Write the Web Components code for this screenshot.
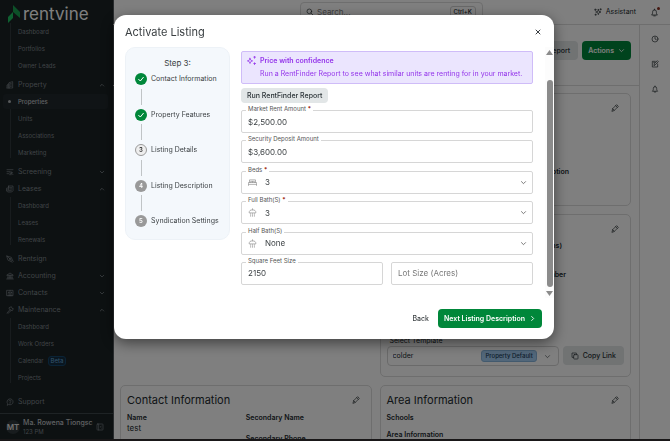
<!DOCTYPE html>
<html lang="en">
<head>
<meta charset="utf-8">
<meta name="viewport" content="width=device-width, initial-scale=1">
<title>Rentvine - Activate Listing</title>
<style>
    html, body { height: 100%; }
    body {
        margin: 0;
        overflow: hidden;
        font-family: Inter, "Liberation Sans", sans-serif;
        font-size: 7px;
        line-height: 10px;
        color: #222a2e;
        background: #fff;
    }
</style>
</head>
<body>
<rv-app>
    <rv-sidebar slot="sidebar">
        <rv-nav-group>
            <rv-nav-link>Dashboard</rv-nav-link>
            <rv-nav-link>Portfolios</rv-nav-link>
            <rv-nav-link>Owner Leads</rv-nav-link>
        </rv-nav-group>
        <rv-nav-group label="Property" icon="building" state="open">
            <rv-nav-link active>Properties</rv-nav-link>
            <rv-nav-link>Units</rv-nav-link>
            <rv-nav-link>Associations</rv-nav-link>
            <rv-nav-link>Marketing</rv-nav-link>
        </rv-nav-group>
        <rv-nav-group label="Screening" icon="screening" state="closed"></rv-nav-group>
        <rv-nav-group label="Leases" icon="leases" state="open">
            <rv-nav-link>Dashboard</rv-nav-link>
            <rv-nav-link>Leases</rv-nav-link>
            <rv-nav-link>Renewals</rv-nav-link>
        </rv-nav-group>
        <rv-nav-group label="Rentsign" icon="pen"></rv-nav-group>
        <rv-nav-group label="Accounting" icon="bank" state="closed"></rv-nav-group>
        <rv-nav-group label="Contacts" icon="contacts" state="closed"></rv-nav-group>
        <rv-nav-group label="Maintenance" icon="hammer" state="open">
            <rv-nav-link>Dashboard</rv-nav-link>
            <rv-nav-link>Work Orders</rv-nav-link>
            <rv-nav-link badge="Beta">Calendar</rv-nav-link>
            <rv-nav-link>Projects</rv-nav-link>
        </rv-nav-group>
        <rv-nav-group class="support" label="Support" icon="help"></rv-nav-group>
    </rv-sidebar>

    <rv-topbar slot="topbar"></rv-topbar>
    <rv-rail slot="rail"></rv-rail>
    <rv-property></rv-property>
</rv-app>

<rv-modal heading="Activate Listing">
    <rv-stepper slot="steps" heading="Step 3:" current="3"></rv-stepper>
    <rv-banner heading="Price with confidence">Run a RentFinder Report to see what similar units are renting for in your market.</rv-banner>
    <rv-button kind="soft">Run RentFinder Report</rv-button>
    <rv-fields>
        <rv-field label="Market Rent Amount" value="$2,500.00" required></rv-field>
        <rv-field label="Security Deposit Amount" value="$3,600.00"></rv-field>
        <rv-field label="Beds" value="3" options="1,2,3,4" icon="bed" required></rv-field>
        <rv-field label="Full Bath(S)" value="3" options="1,2,3,4" icon="shower" required></rv-field>
        <rv-field label="Half Bath(S)" value="None" options="None,1,2" icon="shower"></rv-field>
        <rv-field class="half" label="Square Feet Size" value="2150"></rv-field>
        <rv-field class="half" placeholder="Lot Size (Acres)"></rv-field>
    </rv-fields>
    <rv-button slot="footer" kind="plain">Back</rv-button>
    <rv-button slot="footer" kind="primary" icon="right">Next Listing Description</rv-button>
</rv-modal>

<script>
    // Stroke icons on a 24 grid
    const ICONS = {
        building: '<path d="M3 21V12l6-4v13M9 21V5l11-3v19H3M13 8h3M13 12h3M13 16h3M6 13v5"/>',
        screening: '<path d="M3 5h18M3 11h8M3 17h6"/><circle cx="15" cy="14" r="3"/><path d="M17 16l4 4M11 20h5"/>',
        leases: '<path d="M8 3h13v14l-4 4H5l-3-3V9h6zM8 3v12H2M12 8h5M12 12h5M8 17h8"/>',
        pen: '<path d="M3 3l13 4 3 8-4 4-8-3zM3 3l8 8M15 19l4 3 3-3-3-4"/><circle cx="12" cy="12" r="2"/>',
        bank: '<path d="M3 9l9-6 9 6zM6 10v8M10 10v8M14 10v8M18 10v8M4 18h16M2 21h20"/>',
        contacts: '<path d="M3 4h18v16H3zM12 4v16M6 20h12"/><circle cx="8" cy="10" r="1"/><circle cx="16" cy="10" r="1"/><path d="M6 15h4M14 15h4"/>',
        hammer: '<path d="M3 21l9-10M5 23l10-9M10 5l6-3 2 5 4 1-3 6-4-1-5-4z"/>',
        help: '<path d="M4 21l1-4a9 9 0 1 1 4 3zM9 9a3 3 0 1 1 4 3l-1 2M12 17v1"/>',
        panel: '<rect x="3" y="3" width="18" height="18" rx="2"/><path d="M8 3v18M16 9l-3 3 3 3"/>',
        search: '<circle cx="10" cy="10" r="7"/><path d="M15 15l7 7"/>',
        spark: '<path d="M13 4l2 6 6 2-6 2-2 6-2-6-6-2 6-2zM4 3v5M2 5h5M20 2v4M18 4h4M5 18v4M3 20h4"/>',
        bell: '<path d="M5 18c2-2 2-5 2-8a5 5 0 0 1 10 0c0 3 0 6 2 8zM10 21h4M12 3v2"/>',
        clock: '<circle cx="12" cy="12" r="9"/><path d="M12 6v6l4 2"/>',
        note: '<path d="M13 4H4v17h16v-9M9 16l1-5 9-9 3 3-9 9zM8 8h3"/>',
        pencil: '<path d="M3 21l2-7L17 2l5 5L10 19zM14 5l5 5M5 14l5 5"/>',
        copy: '<rect x="8" y="8" width="13" height="13" rx="2"/><path d="M16 8V3H3v13h5"/>',
        down: '<path d="M5 9l7 7 7-7"/>',
        up: '<path d="M5 16l7-7 7 7"/>',
        right: '<path d="M9 5l7 7-7 7"/>',
        close: '<path d="M4 4l16 16M20 4L4 20"/>',
        check: '<path d="M5 13l5 5 9-11"/>',
        bed: '<path d="M1 20v-8h22v8M1 17h22M4 12V5h16v7M7 12V9h10v3M12 9v3"/>',
        shower: '<path d="M3 12c0-5 3-7 9-7s9 2 9 7zM12 5V2M7 15v2M12 15v2M17 15v2M7 20v2M12 20v2M17 20v2"/>',
        stars: '<path d="M8 6l2 5 5 2-5 2-2 5-2-5-5-2 5-2zM20 1v5M18 3h5M20 18v5M18 20h5"/>'
    };

    const icon = (name, size = 8, weight = 2) =>
        `<svg width="${size}" height="${size}" viewBox="0 0 24 24" fill="none" stroke="currentColor" stroke-width="${weight}" stroke-linecap="round" stroke-linejoin="round" aria-hidden="true">${ICONS[name]}</svg>`;

    const BASE = `
        * { box-sizing: border-box; }
        :host { display: block; box-sizing: border-box; }
        svg { display: block; flex: none; }
        a { color: inherit; text-decoration: none; }
        button, input, select { font: inherit; color: inherit; margin: 0; border: 0; padding: 0; background: none; }
    `;

    class RvElement extends HTMLElement {
        constructor() {
            super();
            this.attachShadow({ mode: 'open' });
        }
        connectedCallback() {
            this.shadowRoot.innerHTML = `<style>${BASE}${this.styles()}</style>${this.markup()}`;
        }
        attr(name) {
            return this.getAttribute(name) || '';
        }
    }

    class RvApp extends RvElement {
        styles() {
            return `
                :host {
                    display: grid;
                    grid-template-columns: 113px minmax(0, 1fr) 31px;
                    grid-template-rows: 25px minmax(0, 1fr) 2px;
                    height: 100vh;
                }
                .side { grid-row: 1 / 3; display: grid; min-height: 0; }
                .top { grid-column: 2 / 4; }
                .page { overflow: hidden; }
                .edge { grid-column: 1 / 4; background: #332e30; }
            `;
        }
        markup() {
            return `
                <div class="side"><slot name="sidebar"></slot></div>
                <div class="top"><slot name="topbar"></slot></div>
                <main class="page"><slot></slot></main>
                <slot name="rail"></slot>
                <div class="edge"></div>
            `;
        }
    }

    class RvSidebar extends RvElement {
        styles() {
            return `
                :host {
                    display: flex;
                    flex-direction: column;
                    min-height: 0;
                    background: #1a2224;
                    border-right: 1px solid #50565a;
                    color: #80888e;
                }
                .logo { display: flex; align-items: center; gap: 3px; height: 23px; padding: 5px 0 0 8px; color: #fff; font-size: 17px; line-height: 18px; flex: none; }
                nav { flex: 1; min-height: 0; overflow: hidden; }
                footer { display: flex; align-items: center; gap: 3px; height: 26px; padding: 0 9px 0 6px; border-top: 1px solid #3c464a; }
                .avatar { width: 14px; height: 14px; border-radius: 50%; background: #30383c; display: grid; place-items: center; font-weight: 600; font-size: 8px; color: #e0e0e0; }
                .who { flex: 1; min-width: 0; font-size: 6px; line-height: 9px; white-space: nowrap; }
                .who b { display: block; font-weight: 500; font-size: 7px; color: #c0c4c8; }
            `;
        }
        markup() {
            return `
                <a class="logo" href="#">
                    <svg width="12" height="18" viewBox="0 0 12 18"><path fill="#18a050" d="M5 0l7 7v6L5 7z"/><path fill="#1cc060" d="M0 12l5-5v6l-5 5z"/></svg>
                    <span>rentvine</span>
                </a>
                <nav><slot></slot></nav>
                <footer>
                    <span class="avatar">MT</span>
                    <span class="who"><b>Ma. Rowena Tiongsc</b>123 PM</span>
                    ${icon('panel')}
                </footer>
            `;
        }
    }

    class RvNavGroup extends RvElement {
        styles() {
            return `
                :host(.support) { margin-top: 5px; }
                .head { display: flex; align-items: center; gap: 4px; height: 17px; padding: 0 8px 0 6px; }
                .head span { flex: 1; }
                .list { display: block; position: relative; padding-bottom: 2px; }
                .list::before { content: ""; position: absolute; left: 10px; top: 0; bottom: 5px; width: 1px; background: #30383c; }
            `;
        }
        markup() {
            const state = this.attr('state');
            const arrow = state ? icon(state === 'open' ? 'up' : 'down', 6, 3) : '';
            const head = this.attr('label')
                ? `<a class="head" href="#">${icon(this.attr('icon'))}<span>${this.attr('label')}</span>${arrow}</a>`
                : '';
            return head + (this.children.length ? '<div class="list"><slot></slot></div>' : '');
        }
    }

    class RvNavLink extends RvElement {
        styles() {
            return `
                a { display: flex; align-items: center; gap: 4px; position: relative; height: 17px; padding-left: 18px; font-size: 6px; }
                :host([active]) a { height: 15px; margin: 1px 5px 1px 3px; padding-left: 15px; border-radius: 3px; background: #20282c; color: #c0c4c8; font-weight: 500; }
                :host([active]) a::before { content: ""; position: absolute; left: 5px; width: 3px; height: 3px; border-radius: 50%; background: #b0b4b8; }
                .badge { padding: 0 2px; border: 1px solid #14466c; border-radius: 3px; background: #122c40; color: #68a8d8; line-height: 8px; }
            `;
        }
        markup() {
            const badge = this.attr('badge');
            return `<a href="#"><slot></slot>${badge ? `<span class="badge">${badge}</span>` : ''}</a>`;
        }
    }

    class RvTopbar extends RvElement {
        styles() {
            return `
                :host { display: grid; grid-template-columns: 187px minmax(0, 183px) 1fr; height: 25px; border-bottom: 1px solid #dcdcdc; }
                .search { grid-column: 2; display: flex; align-items: center; gap: 3px; height: 19px; margin-top: 2px; padding: 0 6px 0 5px; border: 1px solid #dcdcdc; border-radius: 4px; }
                input { flex: 1; min-width: 0; font-size: 8px; }
                input::placeholder { color: #808080; opacity: 1; }
                kbd { padding: 0 3px; border: 1px solid #d0d0d0; border-radius: 3px; font: 500 6px/10px Inter, sans-serif; }
                .tools { display: flex; align-items: center; justify-content: flex-end; gap: 14px; padding-right: 11px; }
                .tools a { display: flex; align-items: center; gap: 4px; position: relative; }
                .dot { position: absolute; right: -1px; top: -1px; width: 3px; height: 3px; border-radius: 50%; background: #8c3020; }
            `;
        }
        markup() {
            return `
                <div class="search">${icon('search')}<input type="search" aria-label="Search" placeholder="Search..."><kbd>Ctrl+K</kbd></div>
                <div class="tools">
                    <a href="#">${icon('spark', 8)}Assistant</a>
                    <a href="#" aria-label="Notifications">${icon('bell', 9)}<span class="dot"></span></a>
                </div>
            `;
        }
    }

    class RvRail extends RvElement {
        styles() {
            return `
                :host { display: flex; flex-direction: column; align-items: center; gap: 17px; padding-top: 10px; border-left: 1px solid #dcdcdc; }
            `;
        }
        markup() {
            return ['clock', 'note', 'bell'].map(n => `<a href="#" aria-label="${n}">${icon(n)}</a>`).join('');
        }
    }

    class RvProperty extends RvElement {
        styles() {
            return `
                .bar { display: flex; justify-content: flex-end; gap: 4px; height: 61px; padding: 16px 8px 0 0; border-bottom: 1px solid #dcdcdc; }
                .grid { display: grid; grid-template-columns: 1fr 1fr; grid-template-rows: 113px 163px 80px; gap: 8px; padding: 7px 8px 0 7px; }
                .right { grid-column: 2; }
                rv-card { min-width: 0; }
                dl { display: grid; grid-template-columns: 1fr 1fr; row-gap: 1px; margin: 6px 0 0; }
                dt { font-weight: 600; }
                dd { margin: 0; font-size: 8px; }
                .pad { margin-bottom: 7px; }
                .fact { font-weight: 600; text-align: right; }
                .note { margin-top: 52px; padding-right: 55px; }
                .term { margin-top: 5px; padding-right: 62px; }
                .number { margin-top: 19px; padding-right: 58px; }
                .bottom { margin-top: 57px; }
                .bottom label { display: block; margin-bottom: 1px; padding-left: 3px; line-height: 8px; }
                .pick { display: flex; gap: 4px; }
                .box { flex: 1; min-width: 0; display: grid; grid-template-columns: 1fr auto auto; align-items: center; gap: 7px; height: 20px; padding: 0 7px 0 5px; border: 1px solid #d4d4d4; border-radius: 4px; }
                .box select { grid-area: 1 / 1 / 2 / 4; appearance: none; width: 100%; }
                .box span { grid-area: 1 / 2; padding: 0 3px; border: 1px solid #86b4dc; border-radius: 3px; background: #a4cef4; color: #203c58; font-size: 6px; font-weight: 500; }
                .box svg { grid-area: 1 / 3; }
            `;
        }
        markup() {
            return `
                <div class="bar">
                    <rv-button kind="soft" size="large">Report</rv-button>
                    <rv-button kind="primary" size="large" icon="down">Actions</rv-button>
                </div>
                <div class="grid">
                    <rv-card class="right"><div class="fact note">Description</div></rv-card>
                    <rv-card class="right">
                        <div class="fact term">Months)</div>
                        <div class="fact number">Number</div>
                        <div class="bottom">
                            <label for="template">Select Template</label>
                            <div class="pick">
                                <div class="box"><select id="template"><option>colder</option></select><span>Property Default</span>${icon('down', 7)}</div>
                                <rv-button kind="soft" size="large" before="copy">Copy Link</rv-button>
                            </div>
                        </div>
                    </rv-card>
                    <rv-card heading="Contact Information">
                        <dl>
                            <div><dt>Name</dt><dd>test</dd></div>
                            <div><dt>Secondary Name</dt></div>
                            <div></div>
                            <div><dt>Secondary Phone</dt></div>
                        </dl>
                    </rv-card>
                    <rv-card heading="Area Information">
                        <dl>
                            <div><dt class="pad">Schools</dt><dt>Area Information</dt></div>
                        </dl>
                    </rv-card>
                </div>
            `;
        }
    }

    class RvCard extends RvElement {
        styles() {
            return `
                :host { padding: 7px 6px; border: 1px solid #dcdcdc; border-radius: 5px; overflow: hidden; }
                header { display: flex; align-items: center; justify-content: space-between; height: 14px; padding-right: 5px; }
                h2 { margin: 0; font-size: 11px; font-weight: 400; line-height: 14px; }
            `;
        }
        markup() {
            return `<header><h2>${this.attr('heading')}</h2><a href="#" aria-label="Edit">${icon('pencil', 8)}</a></header><slot></slot>`;
        }
    }

    class RvButton extends RvElement {
        styles() {
            return `
                :host { display: inline-block; }
                button { display: flex; align-items: center; justify-content: center; gap: 4px; height: 15px; padding: 0 6px; border-radius: 4px; font-weight: 500; white-space: nowrap; }
                :host([kind="soft"]) button { background: #e2e6e7; color: #2a3236; }
                :host([kind="primary"]) button { height: 19px; background: #00873a; color: #fff; font-weight: 600; }
                :host([kind="plain"]) button { height: 19px; }
                :host([size="large"]) button { height: 19px; }
                :host([kind="soft"][size="large"]) button { padding: 0 8px; }
            `;
        }
        markup() {
            const before = this.attr('before');
            const after = this.attr('icon');
            return `<button type="button">${before ? icon(before, 8) : ''}<slot></slot>${after ? icon(after, 7, 3) : ''}</button>`;
        }
    }

    class RvModal extends RvElement {
        styles() {
            return `
                :host { position: fixed; inset: 0; padding: 15px 116px 0 114px; background: rgba(0, 0, 0, 0.5); color: #3a3f42; }
                .dialog { padding: 8px 0 11px 11px; border-radius: 12px; background: #fff; box-shadow: 0 4px 14px rgba(0, 0, 0, 0.5); }
                header { display: flex; align-items: center; justify-content: space-between; height: 18px; padding-right: 13px; }
                h1 { margin: 0; font-size: 11px; font-weight: 400; line-height: 18px; }
                .body { display: grid; grid-template-columns: 105px minmax(0, 1fr) 9px; column-gap: 11px; margin-top: 6px; }
                .form { height: 251px; padding: 4px 1px 0 0; }
                .scroll { display: flex; flex-direction: column; align-items: center; background: #fcfcfc; }
                .track { flex: 1; width: 6px; margin: 25px 0 4px; border-radius: 3px; background: #8b8b8b; }
                .scroll svg { fill: #8b8b8b; }
                .scroll svg:first-child { margin-top: 3px; }
                .scroll svg:last-child { margin-bottom: 2px; }
                footer { display: flex; justify-content: flex-end; gap: 3px; margin-top: 11px; padding-right: 12px; }
            `;
        }
        markup() {
            return `
                <section class="dialog" role="dialog" aria-modal="true" aria-labelledby="title">
                    <header><h1 id="title">${this.attr('heading')}</h1><button type="button" aria-label="Close">${icon('close', 6, 4)}</button></header>
                    <div class="body">
                        <slot name="steps"></slot>
                        <div class="form"><slot></slot></div>
                        <div class="scroll">
                            <svg width="7" height="5" viewBox="0 0 7 5"><path d="M0 5l3.5-5L7 5z"/></svg>
                            <div class="track"></div>
                            <svg width="7" height="5" viewBox="0 0 7 5"><path d="M0 0l3.5 5L7 0z"/></svg>
                        </div>
                    </div>
                    <footer><slot name="footer"></slot></footer>
                </section>
            `;
        }
    }

    class RvStepper extends RvElement {
        styles() {
            return `
                :host { align-self: start; padding: 10px 9px 12px; border: 1px solid #edf2f7; border-radius: 10px; background: #f4f8fc; }
                h2 { margin: 0 0 5px; font-size: 8px; font-weight: 400; line-height: 10px; text-align: center; }
                ol { display: flex; flex-direction: column; height: 154px; margin: 0; padding: 0; list-style: none; }
                li { display: grid; grid-template-columns: 12px 1fr; grid-template-rows: 12px 1fr; column-gap: 4px; align-items: center; }
                li:not(:last-child) { flex: 1; }
                li:not(:last-child)::after { content: ""; width: 1px; height: 16px; background: #c0c4c6; justify-self: center; }
                .dot { display: grid; place-items: center; width: 12px; height: 12px; border-radius: 50%; background: #999; color: #fff; font-size: 6px; font-weight: 600; }
                .done { background: #00873a; }
                .now { background: #eee; border: 1px solid #999; color: #333; }
                .text { white-space: nowrap; }
            `;
        }
        markup() {
            const now = Number(this.attr('current'));
            const steps = ['Contact Information', 'Property Features', 'Listing Details', 'Listing Description', 'Syndication Settings'];
            return `<h2>${this.attr('heading')}</h2><ol>${steps.map((text, i) => {
                const n = i + 1;
                const state = n < now ? 'done' : n === now ? 'now' : '';
                return `<li><span class="dot ${state}">${n < now ? icon('check', 8, 3) : n}</span><span class="text">${text}</span></li>`;
            }).join('')}</ol>`;
        }
    }

    class RvBanner extends RvElement {
        styles() {
            return `
                :host { display: flex; gap: 4px; height: 33px; margin-bottom: 4px; padding: 4px 4px 0 5px; border: 1px solid #cfbcf8; border-radius: 2px; background: #ebe5fe; color: #9333ea; white-space: nowrap; }
                strong { display: block; margin-bottom: 3px; font-weight: 600; }
            `;
        }
        markup() {
            return `${icon('stars', 9)}<div><strong>${this.attr('heading')}</strong><slot></slot></div>`;
        }
    }

    class RvFields extends RvElement {
        styles() {
            return `
                :host { display: grid; grid-template-columns: 1fr 1fr; column-gap: 8px; align-content: space-between; height: 175px; margin-top: 7px; }
                ::slotted(*) { grid-column: 1 / 3; }
                ::slotted(.half) { grid-column: auto; }
            `;
        }
        markup() {
            return '<slot></slot>';
        }
    }

    class RvField extends RvElement {
        styles() {
            return `
                :host { position: relative; display: grid; grid-template-columns: auto 1fr auto; align-items: center; height: 23px; padding: 0 5px 0 6px; border: 1px solid #d6d6d6; border-radius: 2px; font-size: 8px; }
                label { position: absolute; left: 4px; top: -6px; padding: 0 2px; background: #fff; color: #555; font-size: 6px; line-height: 8px; }
                i { color: #a02810; font-style: normal; font-weight: 700; }
                input, select { grid-area: 1 / 1 / 2 / 4; width: 100%; height: 20px; appearance: none; outline: none; }
                input::placeholder { color: #777; opacity: 1; }
                select { padding-left: 17px; }
                .icon, .arrow { pointer-events: none; color: #999; }
                .icon { grid-area: 1 / 1; }
                .arrow { grid-area: 1 / 3; color: #666; }
            `;
        }
        markup() {
            const label = this.attr('label');
            const value = this.attr('value');
            const options = this.attr('options');
            const tag = label ? `<label for="control">${label}${this.hasAttribute('required') ? ' <i>*</i>' : ''}</label>` : '';
            if (!options) {
                const hint = this.attr('placeholder');
                return `${tag}<input id="control" type="text" value="${value}"${hint ? ` placeholder="${hint}" aria-label="${hint}"` : ''}>`;
            }
            const list = options.split(',').map(o => `<option${o === value ? ' selected' : ''}>${o}</option>`).join('');
            return `${tag}<select id="control">${list}</select><span class="icon">${icon(this.attr('icon'), 9, 2)}</span><span class="arrow">${icon('down', 7, 3)}</span>`;
        }
    }

    customElements.define('rv-app', RvApp);
    customElements.define('rv-sidebar', RvSidebar);
    customElements.define('rv-nav-group', RvNavGroup);
    customElements.define('rv-nav-link', RvNavLink);
    customElements.define('rv-topbar', RvTopbar);
    customElements.define('rv-rail', RvRail);
    customElements.define('rv-property', RvProperty);
    customElements.define('rv-card', RvCard);
    customElements.define('rv-button', RvButton);
    customElements.define('rv-modal', RvModal);
    customElements.define('rv-stepper', RvStepper);
    customElements.define('rv-banner', RvBanner);
    customElements.define('rv-fields', RvFields);
    customElements.define('rv-field', RvField);
</script>
</body>
</html>
